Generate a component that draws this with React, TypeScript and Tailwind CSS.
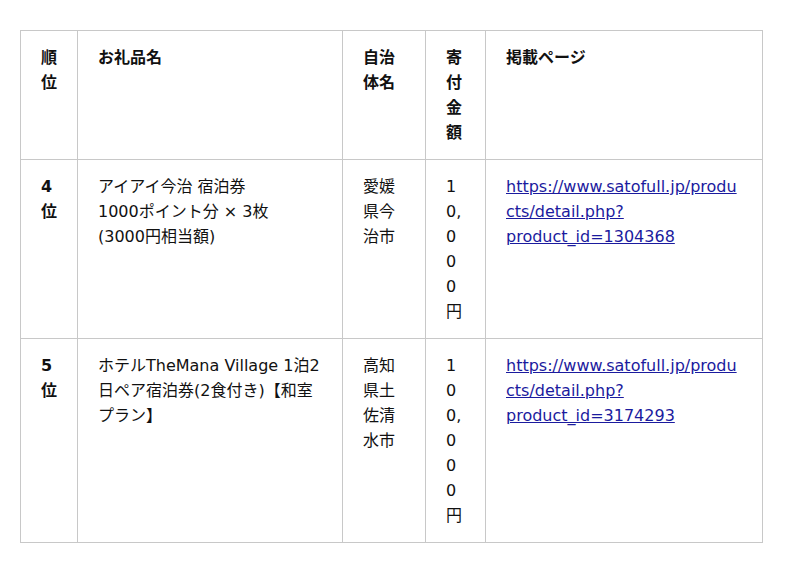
export default function App() {
  const cell = "border border-[#c8c8c8] px-5 py-[14px] align-top [overflow-wrap:anywhere]"

  return <div className="bg-white min-h-[573px] pt-[30px] pl-[20px] text-[16px] leading-[25px] text-[#111] font-['DejaVu_Sans','Noto_Sans_CJK_JP',sans-serif]">
    <table className="table-fixed border-collapse w-[742px]">
      <colgroup>
        <col className="w-[57px]" />
        <col className="w-[265px]" />
        <col className="w-[83px]" />
        <col className="w-[60px]" />
        <col className="w-[277px]" />
      </colgroup>
      <thead>
        <tr className="text-left font-bold">
          <th className={cell}>順位</th>
          <th className={cell}>お礼品名</th>
          <th className={cell}>自治体名</th>
          <th className={cell}>寄付金額</th>
          <th className={cell}>掲載ページ</th>
        </tr>
      </thead>
      <tbody>
        <tr>
          <td className={cell + " font-bold"}>4位</td>
          <td className={cell}>アイアイ今治 宿泊券<br />1000ポイント分 × 3枚<br />(3000円相当額)</td>
          <td className={cell}>愛媛県今治市</td>
          <td className={cell}>10,000円</td>
          <td className={cell + " pr-6"}>
            <a href="#" className="text-[#1b1b9e] underline">https://www.satofull.jp/products/detail.php?product_id=1304368</a>
          </td>
        </tr>
        <tr>
          <td className={cell + " font-bold"}>5位</td>
          <td className={cell}>ホテルTheMana Village 1泊2日ペア宿泊券(2食付き)【和室プラン】</td>
          <td className={cell}>高知県土佐清水市</td>
          <td className={cell}>100,000円</td>
          <td className={cell + " pr-6"}>
            <a href="#" className="text-[#1b1b9e] underline">https://www.satofull.jp/products/detail.php?product_id=3174293</a>
          </td>
        </tr>
      </tbody>
    </table>
  </div>
}
